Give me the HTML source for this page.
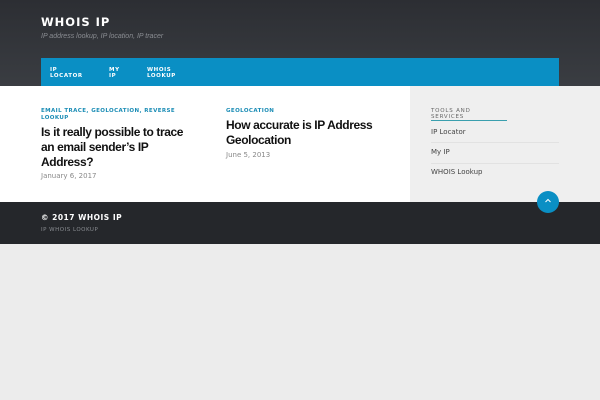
<!DOCTYPE html>
<html><head><meta charset="utf-8"><style>
*{margin:0;padding:0;box-sizing:border-box}
body{width:600px;height:400px;background:#ececec;font-family:"DejaVu Sans","Liberation Sans",sans-serif;position:relative;overflow:hidden}
.hdr{position:absolute;left:0;top:0;width:600px;height:86px;background:linear-gradient(#2c2e33,#3a3d42)}
.title{position:absolute;left:41px;top:15px;color:#fff;font-weight:bold;font-size:11.5px;letter-spacing:1px}
.tag{position:absolute;left:41px;top:33px;color:#8a8d92;font-size:7px;font-style:italic;font-family:"Liberation Sans",sans-serif}
.nav{position:absolute;left:41px;top:58px;width:518px;height:28px;background:#0a8fc4}
.nav span{position:absolute;top:9px;color:#fff;font-size:5.5px;font-weight:bold;letter-spacing:.6px;line-height:6px}
.main{position:absolute;left:0;top:86px;width:410px;height:116px;background:#fff}
.side{position:absolute;left:410px;top:86px;width:190px;height:116px;background:#efefef}
.cat{position:absolute;color:#1a8cb5;font-size:5.5px;font-weight:bold;letter-spacing:.4px;line-height:6.5px}
.h{position:absolute;font-family:"Liberation Sans",sans-serif;font-weight:bold;color:#111;font-size:12px;line-height:15px;letter-spacing:-.4px}
.d{position:absolute;color:#888;font-size:7px}
.foot{position:absolute;left:0;top:202px;width:600px;height:42px;background:#25272b}
.sl{position:absolute;left:431px;font-size:7px;color:#444}
.line{position:absolute;left:431px;width:128px;height:1px;background:#e2e2e2}
</style></head><body>
<div class="hdr"></div>
<div class="title">WHOIS IP</div>
<div class="tag">IP address lookup, IP location, IP tracer</div>
<div class="nav">
<span style="left:9px">IP<br>LOCATOR</span>
<span style="left:68px">MY<br>IP</span>
<span style="left:106px">WHOIS<br>LOOKUP</span>
</div>
<div class="main"></div>
<div class="side"></div>
<div class="cat" style="left:41px;top:108px">EMAIL TRACE, GEOLOCATION, REVERSE<br>LOOKUP</div>
<div class="h" style="left:41px;top:125px;width:145px">Is it really possible to trace<br>an email sender’s IP<br>Address?</div>
<div class="d" style="left:41px;top:172px">January 6, 2017</div>
<div class="cat" style="left:226px;top:108px">GEOLOCATION</div>
<div class="h" style="left:226px;top:118px;width:160px">How accurate is IP Address Geolocation</div>
<div class="d" style="left:226px;top:151px">June 5, 2013</div>
<div style="position:absolute;left:431px;top:108px;font-size:5.5px;color:#666;letter-spacing:.8px;line-height:6px">TOOLS AND<br>SERVICES</div>
<div style="position:absolute;left:431px;top:120px;width:76px;height:1px;background:#3a9fae"></div>
<div class="sl" style="top:128px">IP Locator</div>
<div class="line" style="top:142px"></div>
<div class="sl" style="top:148px">My IP</div>
<div class="line" style="top:163px"></div>
<div class="sl" style="top:168px">WHOIS Lookup</div>
<div class="foot"></div>
<div style="position:absolute;left:41px;top:213px;color:#fff;font-size:7.5px;font-weight:bold;letter-spacing:.5px">© 2017 WHOIS IP</div>
<div style="position:absolute;left:41px;top:227px;color:#8a8d92;font-size:5.5px;letter-spacing:.5px">IP WHOIS LOOKUP</div>
<div style="position:absolute;left:537px;top:191px;width:22px;height:22px;border-radius:50%;background:#0a8fc4"></div>
<svg style="position:absolute;left:544px;top:197px" width="8" height="8" viewBox="0 0 8 8"><path d="M1.5 5 L4 2.5 L6.5 5" stroke="#fff" stroke-width="1" fill="none"/></svg>
</body></html>
